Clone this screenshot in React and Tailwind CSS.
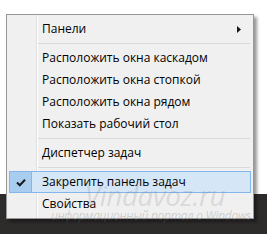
const font = { fontFamily: '"Open Sans", "Noto Sans", sans-serif' };

function Item({ label, arrow, checked }) {
  if (checked) {
    return (
      <div className="flex h-[22px] items-center border border-[#84b6ec] bg-[#d5e6f7]">
        <div className="flex h-full w-[22px] items-center justify-center border-r border-[#84b6ec] bg-[#a8cdef]">
          <svg width="10" height="9" viewBox="0 0 10 9">
            <path d="M1 4.5 L3.8 7.3 L9 1.8" fill="none" stroke="#1a1a1a" strokeWidth="2" />
          </svg>
        </div>
        <span className="pl-[10px] text-[12px] text-black">{label}</span>
      </div>
    );
  }
  return (
    <div className="flex h-[22px] items-center pl-[33px] pr-[10px]">
      <span className="flex-1 text-[12px] text-black">{label}</span>
      {arrow && (
        <svg width="4" height="7" viewBox="0 0 4 7">
          <path d="M0 0 L4 3.5 L0 7 Z" fill="#1a1a1a" />
        </svg>
      )}
    </div>
  );
}

function Separator() {
  return (
    <div className="flex h-[7px] items-center pl-[29px] pr-[1px]">
      <div className="h-px flex-1 bg-[#d9d9d9]" />
    </div>
  );
}

export default function App() {
  return (
    <div className="relative flex h-[234px] w-[267px] flex-col overflow-hidden" style={font}>
      <div className="h-[194px] bg-white" />
      <div className="flex-1 bg-[#2e2b2b]" />

      {/* context menu */}
      <div className="absolute left-[6px] top-[14px] w-[248px] border border-[#979797] bg-[#f0f0f0] px-[2px] py-[3px] shadow-[3px_3px_3px_rgba(0,0,0,0.4)]">
        <div className="absolute bottom-0 left-[29px] top-0 w-px bg-[#e0e0e0]" />
        <div className="absolute bottom-0 left-[30px] top-0 w-px bg-white" />
        <div className="relative">
          <Item label="Панели" arrow />
          <Separator />
          <Item label="Расположить окна каскадом" />
          <Item label="Расположить окна стопкой" />
          <Item label="Расположить окна рядом" />
          <Item label="Показать рабочий стол" />
          <Separator />
          <Item label="Диспетчер задач" />
          <Separator />
          <Item label="Закрепить панель задач" checked />
          <Item label="Свойства" />
        </div>
      </div>

      {/* watermark */}
      <div className="pointer-events-none absolute left-[55px] top-[181px] flex w-[192px] flex-col items-center whitespace-nowrap italic">
        <span className="pl-[8px] text-[28px] leading-[28px] tracking-[-0.5px] text-[rgba(120,120,120,0.2)]">Vindavoz.ru</span>
        <span className="text-[12px] leading-[13px] tracking-[-0.3px] text-[rgba(120,120,120,0.3)]">информационный портал о Windows</span>
      </div>
    </div>
  );
}
